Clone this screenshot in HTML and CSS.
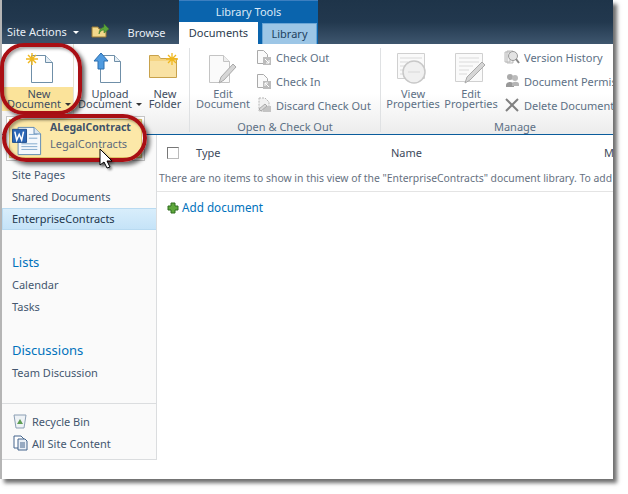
FILE: index.html
```html
<!DOCTYPE html>
<html lang="en">
<head>
<meta charset="utf-8">
<title>EnterpriseContracts</title>
<link rel="stylesheet" href="styles.css">
</head>
<body>
<div class="window">
  <header class="topbar">
    <div class="site-actions">Site Actions <span class="caret light"></span></div>
    <svg class="nav-icon" width="18" height="18" viewBox="0 0 18 18"><path d="M1 6h6l1 2h7v8H1z" fill="#f3d98b" stroke="#9a7b35"/><path d="M8 13c0-4 2-6 5-7V3l5 5-5 4V9c-2 0-4 1-5 4z" fill="#5aa43a" stroke="#3c7a2a" stroke-width=".6"/></svg>
    <div class="tab browse">Browse</div>
    <div class="context">
      <div class="context-title">Library Tools</div>
      <div class="context-tabs">
        <div class="tab active">Documents</div>
        <div class="tab library">Library</div>
      </div>
    </div>
  </header>

  <section class="ribbon">
    <div class="group group-new">
      <div class="group-items">
        <div class="big selected">
          <svg class="big-icon" width="32" height="32" viewBox="0 0 32 32"><path d="M9.500 3.500h14l7 7v20h-21z" fill="#fff" stroke="#6f8fa8"/><path d="M23.500 3.500v7h7" fill="#e4edf4" stroke="#6f8fa8"/><path d="M10 1v12M4 7h12M6 3l8 8M14 3l-8 8" stroke="#f0b71c" stroke-width="1.400"/></svg>
          <div class="big-label label-selected">New<br>Document <span class="caret"></span></div>
        </div>
        <div class="big upload">
          <svg class="big-icon" width="32" height="32" viewBox="0 0 32 32"><path d="M6.500 3.500h14l6 6v21h-20z" fill="#fff" stroke="#6f8fa8"/><path d="M20.500 3.500v6h6" fill="#e4edf4" stroke="#6f8fa8"/><path d="M7 1l7 8h-4v8H4V9H0z" fill="#4f9be0" stroke="#2c6eaf"/></svg>
          <div class="big-label">Upload<br>Document <span class="caret"></span></div>
        </div>
        <div class="big folder">
          <svg class="big-icon" width="32" height="32" viewBox="0 0 32 32"><path d="M.5 3.500h9l2 3h16v19H.5z" fill="#f5d483" stroke="#c8a24c"/><path d="M1 9h26v16H1z" fill="#f9e2a4"/><path d="M23 1v12M17 7h12M19 3l8 8M27 3l-8 8" stroke="#f0b71c" stroke-width="1.300"/></svg>
          <div class="big-label">New<br>Folder</div>
        </div>
      </div>
      <div class="group-title">&nbsp;</div>
    </div>

    <div class="group group-open">
      <div class="group-items">
        <div class="big edit">
          <svg class="big-icon" width="32" height="32" viewBox="0 0 32 32"><path d="M2.500 3.500h14l6 6v21h-20z" fill="#fafafa" stroke="#c4c4c4"/><path d="M16.500 3.500v6h6" fill="#eee" stroke="#c4c4c4"/><path d="M12 31l2-6 12-13 3 3-12 13z" fill="#d6d6d6" stroke="#a9a9a9"/></svg>
          <div class="big-label muted">Edit<br>Document</div>
        </div>
        <div class="small-col">
          <div class="small"><svg width="16" height="16" viewBox="0 0 16 16"><path d="M1.500 1.500h6l4 4v9h-10z" fill="#fafafa" stroke="#aaa"/><path d="M7 8h8v8H7z" fill="#bcbcbc"/><path d="M9 10l4 4m0-3v3h-3" stroke="#fff" fill="none"/></svg>Check Out</div>
          <div class="small"><svg width="16" height="16" viewBox="0 0 16 16"><path d="M1.500 1.500h6l4 4v9h-10z" fill="#fafafa" stroke="#aaa"/><path d="M7 8h8v8H7z" fill="#bcbcbc"/><path d="M13 14l-4-4m0 3v-3h3" stroke="#fff" fill="none"/></svg>Check In</div>
          <div class="small"><svg width="16" height="16" viewBox="0 0 16 16"><path d="M3 1h6l4 4v9H3z" fill="#f2f2f2" stroke="#b5b5b5" stroke-dasharray="2 1"/><path d="M7 9h8v6H7z" fill="#c4c4c4"/><path d="M3 12l6-5 2 2-6 5z" fill="#d8d8d8" stroke="#aaa"/></svg>Discard Check Out</div>
        </div>
      </div>
      <div class="group-title">Open &amp; Check Out</div>
    </div>

    <div class="group group-manage">
      <div class="group-items">
        <div class="big view">
          <svg class="big-icon" width="32" height="32" viewBox="0 0 32 32"><path d="M.5 1.500h27v25H.5z" fill="#fafafa" stroke="#d0d0d0"/><path d="M3 6h22M3 10h8M3 14h5M3 18h5M3 22h6" stroke="#dadada"/><circle cx="17" cy="20" r="11" fill="#f0f0f0" stroke="#c8c8c8" stroke-width="1.500"/><path d="M11 20h12" stroke="#d8d8d8"/></svg>
          <div class="big-label muted">View<br>Properties</div>
        </div>
        <div class="big props">
          <svg class="big-icon" width="32" height="32" viewBox="0 0 32 32"><path d="M.5 1.500h27v28H.5z" fill="#fafafa" stroke="#d0d0d0"/><path d="M4 6h20M4 10h20M4 14h14M4 18h10M4 22h8" stroke="#dadada"/><path d="M10 31l2-6 15-15 3 3-15 15z" fill="#d6d6d6" stroke="#a9a9a9"/></svg>
          <div class="big-label muted">Edit<br>Properties</div>
        </div>
        <div class="small-col manage-col">
          <div class="small"><svg width="16" height="16" viewBox="0 0 16 16"><path d="M1 3h5v10H1zM3 2h6v12H3z" fill="#f0f0f0" stroke="#bbb"/><circle cx="9" cy="7" r="4.500" fill="#e3e3e3" stroke="#999"/><path d="M12 10l3 4" stroke="#888" stroke-width="2"/></svg>Version History</div>
          <div class="small"><svg width="16" height="16" viewBox="0 0 16 16"><circle cx="6" cy="4" r="3" fill="#aaa"/><circle cx="11" cy="5" r="3" fill="#bbb"/><path d="M2 12c0-4 8-4 8 0v2H2z" fill="#999"/><path d="M8 11c0-3 7-3 7 0v2H8z" fill="#b5b5b5"/></svg>Document Permissions</div>
          <div class="small"><svg width="16" height="16" viewBox="0 0 16 16"><path d="M2 2l12 12M14 2L2 14" stroke="#808080" stroke-width="2"/></svg>Delete Document</div>
        </div>
      </div>
      <div class="group-title">Manage</div>
    </div>
  </section>

  <div class="content">
    <nav class="sidenav">
      <div class="nav-libs">
        <a class="nav-item">Site Pages</a>
        <a class="nav-item">Shared Documents</a>
        <a class="nav-item current">EnterpriseContracts</a>
      </div>
      <a class="nav-head lists">Lists</a>
      <a class="nav-item">Calendar</a>
      <a class="nav-item">Tasks</a>
      <a class="nav-head disc">Discussions</a>
      <a class="nav-item">Team Discussion</a>
      <div class="nav-foot">
        <a class="foot-item"><svg width="16" height="16" viewBox="0 0 16 16"><path d="M2 2h12l-2 13H4z" fill="#eef2f6" stroke="#8b9fb4"/><path d="M5 11l3-5 3 5z" fill="#5f9e55"/></svg>Recycle Bin</a>
        <a class="foot-item"><svg width="16" height="16" viewBox="0 0 16 16"><path d="M2 1h7l3 3v9H2z" fill="#fff" stroke="#44658c"/><path d="M6 4h7l2 2v9H6z" fill="#e9eff6" stroke="#44658c"/><path d="M8 8h5M8 10h5M8 12h5" stroke="#44658c"/></svg>All Site Content</a>
      </div>
    </nav>
    <main class="list">
      <div class="list-head">
        <span class="check"></span>
        <span class="col col-type">Type</span>
        <span class="col col-name">Name</span>
        <span class="col">Modified</span>
      </div>
      <div class="empty">There are no items to show in this view of the "EnterpriseContracts" document library. To add a new item, click "New" or "Upload".</div>
      <a class="add"><svg width="12" height="12" viewBox="0 0 12 12"><path d="M4 1h4v3h3v4H8v3H4V8H1V4h3z" fill="#5fa83c" stroke="#2f6d1f"/></svg>Add document</a>
    </main>
  </div>

  <div class="menu">
    <div class="menu-item">
      <svg class="word" width="30" height="30" viewBox="0 0 32 32"><path d="M6.500 1.500h17l7 7v22h-24z" fill="#f4f8fc" stroke="#5c87b2"/><path d="M23.500 1.500v7h7" fill="#dbe7f2" stroke="#5c87b2"/><path d="M18 9h9M18 13h9M10 19h17M10 22h17M10 25h17" stroke="#7ea6cc"/><path d="M.5 3.500h15v14H.5z" fill="#2a65b5" stroke="#1b4a8a"/><path d="M3 6l2 9 2.700-6 2.600 6 2-9" fill="none" stroke="#fff" stroke-width="1.600"/></svg>
      <div class="menu-text"><b>ALegalContract</b><span>LegalContracts</span></div>
    </div>
  </div>
  <div class="ring ring-new"></div>
  <div class="ring ring-menu"></div>
  <svg class="cursor" width="14" height="22" viewBox="0 0 14 22"><path d="M1 1v16l4-3 3 6 3-1-3-6h5z" fill="#fff" stroke="#000"/></svg>
</div>
</body>
</html>
```
FILE: styles.css
```css
* { box-sizing: border-box; }
html, body { margin: 0; background: #fff; }
body { width: 628px; height: 494px; overflow: hidden; font: 11px/13px "Noto Sans", Tahoma, sans-serif; color: #44576f; }
a { display: block; }

.window {
  position: relative;
  width: 613px;
  height: 479px;
  background: #fff;
  border-left: 2px solid #b5b5b5;
  box-shadow: 4px 4px 4px #6f6f6f;
  display: flex;
  flex-direction: column;
}

.topbar {
  height: 44px;
  flex: none;
  display: flex;
  align-items: flex-end;
  background: linear-gradient(#1e3449 0, #22384e 50%, #3e566e 100%);
  overflow: hidden;
  color: #fff;
}
.site-actions { width: 88px; padding: 0 0 6px 5px; color: #e8eef5; white-space: nowrap; }
.caret { display: inline-block; vertical-align: 2px; margin-left: 1px; border: 3px solid transparent; border-top: 3px solid #333; border-bottom: 0; }
.caret.light { border-top-color: #fff; margin-left: 3px; }
.nav-icon { margin: 0 0 5px 1px; flex: none; }
.tab { text-align: center; font-size: 11px; }
.browse { width: 70px; padding: 0 0 5px 5px; color: #e8eef5; }
.context { width: 139px; height: 44px; background: #0a64ad; border-top: 1px solid #3c7fc0; display: flex; flex-direction: column; }
.context-title { height: 21px; line-height: 21px; text-align: center; color: #dbe9f6; }
.context-tabs { display: flex; flex: 1; align-items: flex-end; }
.active { width: 79px; height: 22px; line-height: 22px; background: #fff; color: #2b3b4e; }
.library { width: 55px; margin-left: 4px; height: 21px; line-height: 20px; background: #9cc6e6; color: #21425f; border: 1px solid #6aa6d6; border-bottom: 0; }

.ribbon {
  height: 91px;
  flex: none;
  display: flex;
  background: linear-gradient(#fff 0, #fff 55%, #ececec 100%);
  border-bottom: 1px solid #0a5c9c;
  overflow: hidden;
}
.group { display: flex; flex-direction: column; flex: none; border-right: 1px solid #dfe1e3; margin-top: 4px; height: 84px; }
.group-new { width: 188px; }
.group-open { width: 191px; }
.group-manage { width: 268px; border-right: 0; }
.group-items { display: flex; height: 71px; }
.group-title { text-align: center; height: 13px; line-height: 15px; color: #5d7085; font-size: 11px; }

.big { display: flex; flex-direction: column; align-items: center; text-align: center; margin-top: -4px; padding-top: 8px; flex: none; }
.big-icon { flex: none; margin-bottom: 3px; overflow: visible; }
.big-label { line-height: 10px; padding-top: 2px; white-space: nowrap; color: #3f4e60; }
.muted { color: #5d7085; }
.selected { width: 72px; margin-right: 5px; height: 87px; border-right: 1px solid #e6e2d2; }
.label-selected { width: 71px; height: 24px; padding-left: 3px; background: #fbe39a; align-self: flex-start; }
.upload { width: 62px; }
.folder { width: 48px; }
.edit { width: 62px; margin-left: 2px; }
.small-col { display: flex; flex-direction: column; gap: 8px; white-space: nowrap; margin: 1px 0 0 2px; }
.small { display: flex; align-items: center; gap: 4px; height: 16px; color: #5d7085; }
.small svg { flex: none; }
.view { width: 58px; margin-left: 3px; }
.props { width: 58px; }
.manage-col { margin-left: 4px; }
.manage-col .small { gap: 4px; }

.content { flex: 1; display: flex; min-height: 0; }
.sidenav { width: 155px; flex: none; height: 325px; background: #fafafa; border-right: 1px solid #dbdddf; border-bottom: 1px solid #dbdddf; display: flex; flex-direction: column; }
.nav-libs { padding-top: 29px; }
.nav-item { height: 22px; line-height: 22px; padding-left: 10px; color: #44576f; white-space: nowrap; }
.current { background: linear-gradient(#d8edfb, #c5e3f8); border: 1px solid #b8daf1; border-right: 0; padding-left: 9px; line-height: 20px; color: #23374d; }
.nav-head { padding-left: 10px; font-size: 13px; line-height: 18px; color: #0072bc; }
.lists { margin-top: 23px; }
.disc { margin-top: 23px; }
.lists + .nav-item { margin-top: 3px; }
.disc + .nav-item { margin-top: 3px; }
.nav-foot { margin-top: auto; height: 56px; border-top: 1px solid #dbdddf; padding-top: 6px; }
.foot-item { display: flex; align-items: center; gap: 4px; height: 22px; padding-left: 10px; color: #44576f; }

.list { flex: 1; min-width: 0; overflow: hidden; white-space: nowrap; }
.list-head { height: 35px; padding-left: 10px; display: flex; align-items: center; color: #3d4a5b; }
.check { width: 12px; height: 12px; border: 1px solid #777; border-right-color: #bbb; border-bottom-color: #bbb; flex: none; margin-right: 17px; }
.col { flex: none; }
.col-type { width: 195px; }
.col-name { width: 213px; }
.empty { height: 22px; line-height: 16px; border-bottom: 1px solid #e4e4e4; color: #66717f; padding-left: 2px; font-size: 10.4px; }
.add { display: flex; align-items: center; gap: 3px; margin: 9px 0 0 10px; color: #0072bc; font-size: 11.7px; }

.menu { position: absolute; left: 4px; top: 116px; width: 139px; height: 45px; background: #fff; border: 1px solid #c6c6c6; padding: 2px; }
.menu-item { height: 39px; background: #fce8a8; border: 1px solid #e2c76a; display: flex; align-items: center; gap: 8px; padding-left: 2px; }
.word { flex: none; margin-top: 4px; }
.menu-text { display: flex; flex-direction: column; gap: 3px; padding-bottom: 6px; color: #5d6a7c; }
.menu-text b { font-weight: 700; color: #3f5269; font-size: 10.5px; }
.ring { position: absolute; border: 4px solid #a90f14; box-shadow: 3px 3px 4px rgba(0,0,0,.6), inset 2px 2px 3px rgba(0,0,0,.35); }
.ring-new { left: -2px; top: 43px; width: 82px; height: 72px; border-radius: 24px; }
.ring-menu { left: 0; top: 114px; width: 145px; height: 48px; border-radius: 24px; }
.cursor { position: absolute; left: 97px; top: 148px; filter: drop-shadow(2px 2px 1px rgba(0,0,0,.4)); }
```
